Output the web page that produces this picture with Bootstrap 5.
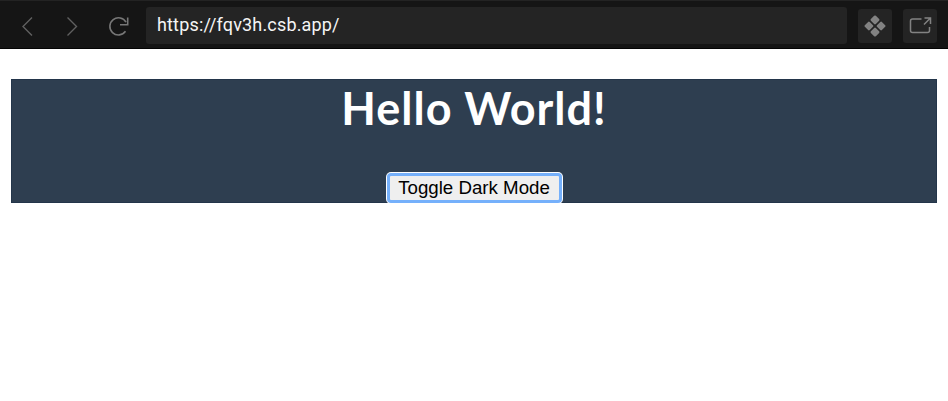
<!DOCTYPE html>
<html lang="en">
<head>
<meta charset="utf-8">
<meta name="viewport" content="width=device-width, initial-scale=1">
<title>Hello World</title>
<link href="https://cdn.jsdelivr.net/npm/bootstrap@5.3.0/dist/css/bootstrap.min.css" rel="stylesheet">
<style>
body { background: #fff; overflow: hidden; }
.browser-bar { height: 49px; background: #151515; border-top: 1px solid #232323; border-bottom: 1px solid #040404; padding: 2px 11px 0 20px; }
.nav-icon { width: 22px; height: 22px; color: #777; line-height: 0; }
.nav-icon.dim { color: #606060; }
.nav-icon.reload { margin-left: 19px; }
.address { height: 37px; margin-left: 17px; margin-right: 11px; padding-left: 11px; background: #242424; border-radius: 3px; color: #f5f5f5; font: 18px/36px Roboto, sans-serif; letter-spacing: .16px; }
.tool { width: 34px; height: 34px; background: #242424; border-radius: 3px; color: #828282; }
.tool + .tool { margin-left: 11px; }
.nav-icon svg, .tool svg { display: block; overflow: visible; }
.hero { margin: 30px 11px 0; height: 124px; background: #2e3e50; border: 1px solid #23354a; }
.hero h1 { font: 700 45px/56px Lato, sans-serif; letter-spacing: 1px; color: #fff; }
.toggle { width: 175px; height: 30px; padding: 0; background: #efefef; border: 3px solid #75b0fb; border-radius: 4px; box-shadow: 0 0 0 1px #fff; color: #000; font: 18.7px/24px "Liberation Sans", Arial, sans-serif; margin-bottom: -1px; }
</style>
</head>
<body>
<nav class="browser-bar d-flex align-items-center">
  <button class="nav-icon dim btn p-0 border-0 rounded-0" aria-label="Back"><svg width="22" height="22" viewBox="0 0 22 22" fill="none" stroke="currentColor" stroke-width="1.4"><path d="M12 2.500 3 11.500l9 9"/></svg></button>
  <button class="nav-icon dim btn p-0 border-0 rounded-0 ms-4" aria-label="Forward"><svg width="22" height="22" viewBox="0 0 22 22" fill="none" stroke="currentColor" stroke-width="1.4"><path d="m1.500 2.500 9 9-9 9"/></svg></button>
  <button class="nav-icon reload btn p-0 border-0 rounded-0" aria-label="Reload"><svg width="22" height="22" viewBox="0 0 22 22" fill="none" stroke="currentColor" stroke-width="1.6"><path d="M18.500 16.300A8.600 8.600 0 1 1 19 7.200M20.700 2.500v7.200h-7.700"/></svg></button>
  <div class="address flex-grow-1">https://fqv3h.csb.app/</div>
  <button class="tool btn p-0 border-0 d-flex align-items-center justify-content-center" aria-label="Components"><svg width="24" height="24" viewBox="-12 -12 24 24" fill="currentColor"><g transform="rotate(45)"><rect x="-7.800" y="-7.800" width="7" height="7" rx="1.200"/><rect x="0.800" y="-7.800" width="7" height="7" rx="1.200"/><rect x="-7.800" y="0.800" width="7" height="7" rx="1.200"/><rect x="0.800" y="0.800" width="7" height="7" rx="1.200"/></g></svg></button>
  <button class="tool btn p-0 border-0 d-flex align-items-center justify-content-center" aria-label="Open in new window"><svg width="24" height="24" viewBox="0 0 24 24" fill="none" stroke="currentColor" stroke-width="1.5"><path d="M13.500 5H4.500Q2.500 5 2.500 7v9.500q0 2 2 2h15q2 0 2-2V13M16.500 4h6v6M22.200 4.300 16 10.500"/></svg></button>
</nav>
<main class="hero text-center d-flex flex-column align-items-center justify-content-between">
  <h1 class="m-0">Hello World!</h1>
  <button class="toggle">Toggle Dark Mode</button>
</main>
<script src="https://cdn.jsdelivr.net/npm/bootstrap@5.3.0/dist/js/bootstrap.bundle.min.js"></script>
</body>
</html>
